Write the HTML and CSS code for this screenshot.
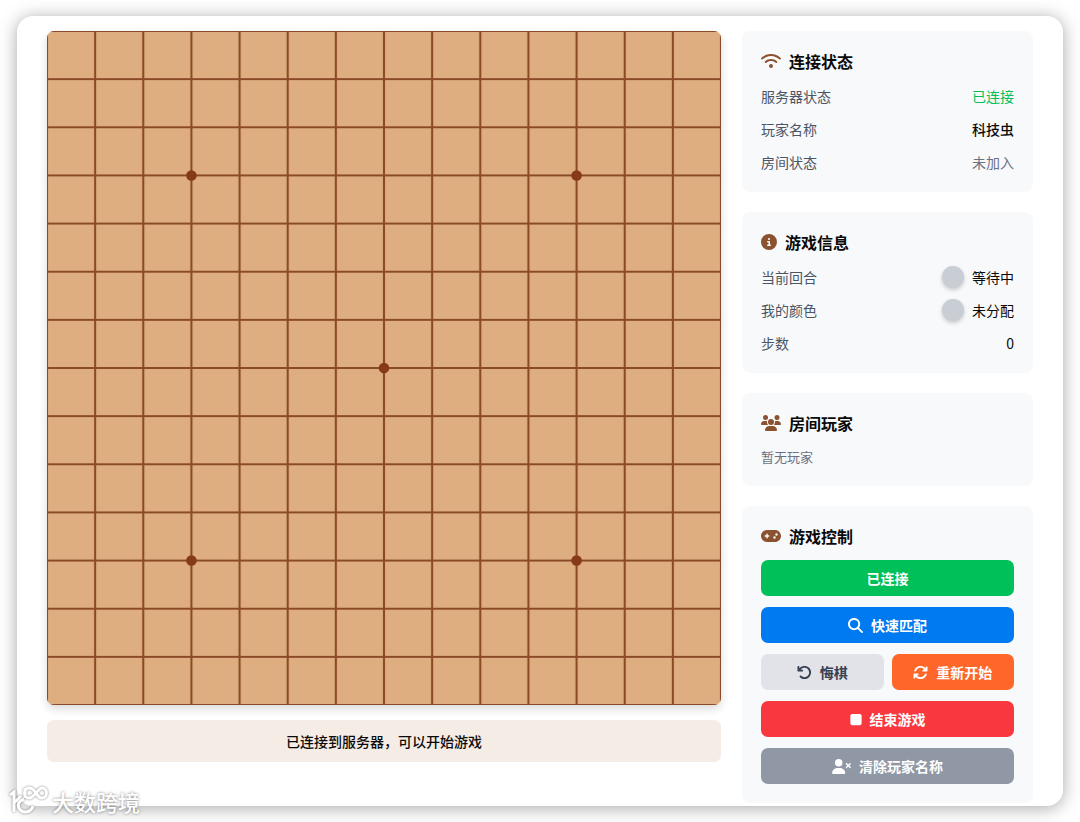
FILE: index.html
```html
<!DOCTYPE html>
<html lang="zh-CN">
<head>
  <meta charset="UTF-8">
  <meta name="viewport" content="width=device-width, initial-scale=1">
  <title>五子棋</title>
  <link rel="stylesheet" href="styles.css">
</head>
<body>
  <main class="window">
    <!-- 棋盘区域 -->
    <section class="board-area">
      <svg class="board" viewBox="0 0 700 700" role="img" aria-label="棋盘">
        <defs>
          <pattern id="grid" width="50" height="50" patternUnits="userSpaceOnUse">
            <path class="grid-line" d="M0 0H50M0 50H50M0 0V50M50 0V50"/>
          </pattern>
        </defs>
        <rect width="700" height="700" fill="url(#grid)"/>
        <g class="stars">
          <circle cx="150" cy="150" r="5.5"/>
          <circle cx="550" cy="150" r="5.5"/>
          <circle cx="350" cy="350" r="5.5"/>
          <circle cx="150" cy="550" r="5.5"/>
          <circle cx="550" cy="550" r="5.5"/>
        </g>
      </svg>
      <div class="status" role="status">已连接到服务器，可以开始游戏</div>
    </section>

    <!-- 右侧信息栏 -->
    <aside class="sidebar">
      <section class="card">
        <h2>
          <svg class="icon" width="20" height="16" viewBox="0 0 640 512"><path d="M54.2 202.9C123.2 136.700 216.800 96 320 96s196.800 40.700 265.800 106.900c12.800 12.200 33 11.800 45.200-.9s11.800-33-.9-45.200C549.700 79.500 440.400 32 320 32S90.300 79.500 9.800 156.700C-2.900 169-3.300 189.200 8.900 202s32.500 13.200 45.200 .9zM320 256c56.800 0 108.600 21.100 148.200 56c13.300 11.700 33.500 10.400 45.200-2.800s10.400-33.500-2.800-45.200C459.800 219.200 393 192 320 192s-139.800 27.200-190.500 72c-13.300 11.700-14.500 31.900-2.800 45.200s31.900 14.500 45.200 2.800c39.500-34.900 91.300-56 148.200-56zm64 160a64 64 0 1 0-128 0 64 64 0 1 0 128 0z"/></svg>
          连接状态
        </h2>
        <dl class="rows">
          <div class="row"><dt>服务器状态</dt><dd class="online">已连接</dd></div>
          <div class="row"><dt>玩家名称</dt><dd class="name">科技虫</dd></div>
          <div class="row"><dt>房间状态</dt><dd class="muted">未加入</dd></div>
        </dl>
      </section>

      <section class="card">
        <h2>
          <svg class="icon" width="16" height="16" viewBox="0 0 512 512"><path d="M256 512A256 256 0 1 0 256 0a256 256 0 1 0 0 512zM216 336h24V272H216c-13.300 0-24-10.700-24-24s10.700-24 24-24h48c13.300 0 24 10.700 24 24v88h8c13.300 0 24 10.700 24 24s-10.700 24-24 24H216c-13.300 0-24-10.700-24-24s10.700-24 24-24zm40-208a32 32 0 1 1 0 64 32 32 0 1 1 0-64z"/></svg>
          游戏信息
        </h2>
        <dl class="rows">
          <div class="row"><dt>当前回合</dt><dd><span class="piece"></span>等待中</dd></div>
          <div class="row"><dt>我的颜色</dt><dd><span class="piece"></span>未分配</dd></div>
          <div class="row"><dt>步数</dt><dd>0</dd></div>
        </dl>
      </section>

      <section class="card">
        <h2>
          <svg class="icon" width="20" height="16" viewBox="0 0 640 512"><path d="M144 0a80 80 0 1 1 0 160A80 80 0 1 1 144 0zM512 0a80 80 0 1 1 0 160A80 80 0 1 1 512 0zM0 298.700C0 239.800 47.800 192 106.700 192h42.700c15.900 0 31 3.500 44.600 9.700c-1.300 7.200-1.900 14.700-1.900 22.300c0 38.200 16.800 72.500 43.300 96H21.300C9.600 320 0 310.400 0 298.700zM405.300 320h-.7c26.600-23.500 43.300-57.800 43.300-96c0-7.600-.7-15-1.900-22.300c13.600-6.300 28.700-9.700 44.600-9.700h42.700C592.200 192 640 239.800 640 298.700c0 11.800-9.600 21.300-21.300 21.300H405.300zM224 224a96 96 0 1 1 192 0 96 96 0 1 1-192 0zM128 485.300C128 411.700 187.700 352 261.300 352H378.700C452.300 352 512 411.700 512 485.300c0 14.700-11.900 26.700-26.700 26.700H154.700c-14.700 0-26.700-11.900-26.700-26.700z"/></svg>
          房间玩家
        </h2>
        <p class="empty">暂无玩家</p>
      </section>

      <section class="card">
        <h2>
          <svg class="icon" width="20" height="16" viewBox="0 0 640 512"><path fill-rule="evenodd" d="M192 64C86 64 0 150 0 256S86 448 192 448H448c106 0 192-86 192-192s-86-192-192-192H192zM496 168a40 40 0 1 1 0 80 40 40 0 1 1 0-80zM392 304a40 40 0 1 1 80 0 40 40 0 1 1-80 0zM168 200c0-13.300 10.700-24 24-24s24 10.700 24 24v32h32c13.300 0 24 10.700 24 24s-10.700 24-24 24H216v32c0 13.300-10.700 24-24 24s-24-10.700-24-24V280H136c-13.300 0-24-10.700-24-24s10.700-24 24-24h32V200z"/></svg>
          游戏控制
        </h2>
        <div class="controls">
          <button class="btn green" type="button">已连接</button>
          <button class="btn blue" type="button">
            <svg width="15" height="15" viewBox="0 0 512 512"><path d="M416 208c0 45.900-14.900 88.300-40 122.700L502.600 457.400c12.500 12.500 12.500 32.800 0 45.300s-32.800 12.500-45.300 0L330.700 376c-34.400 25.200-76.800 40-122.700 40C93.100 416 0 322.900 0 208S93.100 0 208 0S416 93.100 416 208zM208 352a144 144 0 1 0 0-288 144 144 0 1 0 0 288z"/></svg>
            快速匹配
          </button>
          <div class="pair">
            <button class="btn light" type="button">
              <svg width="15" height="15" viewBox="0 0 512 512"><path d="M125.700 160H176c17.700 0 32 14.300 32 32s-14.300 32-32 32H48c-17.700 0-32-14.300-32-32V64c0-17.700 14.300-32 32-32s32 14.300 32 32v51.200L97.600 97.600c87.500-87.500 229.300-87.500 316.800 0s87.500 229.300 0 316.800s-229.300 87.500-316.800 0c-12.500-12.500-12.500-32.800 0-45.300s32.800-12.500 45.300 0c62.500 62.500 163.800 62.500 226.300 0s62.500-163.800 0-226.300s-163.800-62.500-226.300 0L125.700 160z"/></svg>
              悔棋
            </button>
            <button class="btn orange" type="button">
              <svg width="15" height="15" viewBox="0 0 512 512"><path d="M105.100 202.600c7.700-21.800 20.200-42.300 37.800-59.800c62.500-62.500 163.800-62.500 226.300 0L386.300 160H352c-17.700 0-32 14.300-32 32s14.300 32 32 32H463.500c17.700 0 32-14.300 32-32V80c0-17.700-14.300-32-32-32s-32 14.300-32 32v35.200L414.400 97.600c-87.500-87.500-229.300-87.500-316.800 0C73.200 122 55.600 150.700 44.800 181.400c-5.900 16.700 2.900 34.900 19.500 40.800s34.900-2.900 40.800-19.500zM16 319.600V432c0 17.700 14.300 32 32 32s32-14.300 32-32V396.900l17.600 17.500c87.500 87.400 229.300 87.400 316.700 0c24.400-24.400 42.100-53.100 52.900-83.700c5.900-16.700-2.900-34.900-19.500-40.800s-34.900 2.900-40.800 19.500c-7.700 21.800-20.200 42.300-37.800 59.800c-62.500 62.500-163.800 62.500-226.300 0L125.600 352H160c17.700 0 32-14.300 32-32s-14.300-32-32-32H48.400C30.700 288 16 302 16 319.600z"/></svg>
              重新开始
            </button>
          </div>
          <button class="btn red" type="button">
            <svg width="12" height="15" viewBox="0 0 384 512"><path d="M0 128C0 92.700 28.700 64 64 64H320c35.300 0 64 28.700 64 64V384c0 35.300-28.700 64-64 64H64c-35.300 0-64-28.700-64-64V128z"/></svg>
            结束游戏
          </button>
          <button class="btn gray" type="button">
            <svg width="19" height="15" viewBox="0 0 640 512"><path d="M96 128a128 128 0 1 1 256 0A128 128 0 1 1 96 128zM0 482.300C0 383.800 79.800 304 178.300 304h91.400C368.200 304 448 383.800 448 482.300c0 16.400-13.300 29.700-29.700 29.700H29.700C13.300 512 0 498.700 0 482.300zM471 143c9.400-9.400 24.600-9.400 33.900 0l47 47 47-47c9.400-9.400 24.600-9.400 33.900 0s9.400 24.600 0 33.900l-47 47 47 47c9.400 9.400 9.400 24.600 0 33.900s-24.600 9.400-33.900 0l-47-47-47 47c-9.400 9.400-24.600 9.400-33.900 0s-9.400-24.600 0-33.900l47-47-47-47c-9.400-9.400-9.400-24.600 0-33.900z"/></svg>
            清除玩家名称
          </button>
        </div>
      </section>
    </aside>
  </main>

  <!-- 左下角水印 -->
  <div class="watermark">
    <svg width="40" height="30" viewBox="0 0 40 30">
      <path d="M2 9l4-3v20M6 17l7-7M16 13c-5 2-7 5-5 9 3 6 12 5 14-2"/>
      <path d="M17 2v10M28 7c-3-5-5-5-7-5-6 0-6 10 0 10 3 0 5-3 7-5s4-5 6-5c6 0 6 10 0 10-3 0-4-2-6-5z"/>
    </svg>
    <span>大数跨境</span>
  </div>
</body>
</html>
```
FILE: styles.css
```css
* {
  box-sizing: border-box;
  margin: 0;
}

body {
  padding: 16px 17px;
  background: #fff;
  color: #0a0a0a;
  font-family: "Noto Sans CJK SC", sans-serif;
  font-size: 14px;
  line-height: 22px;
}

/* 主窗口 */
.window {
  display: grid;
  grid-template-columns: minmax(0, 1fr) 291px;
  align-items: start;
  gap: 21px;
  padding: 15px 30px 3px;
  background: #fff;
  border-radius: 16px;
  box-shadow: 0 2px 18px rgba(0, 0, 0, 0.35);
}

.board-area {
  display: grid;
  gap: 15px;
}

/* 棋盘 */
.board {
  display: block;
  width: 100%;
  background: #deae80;
  border-radius: 7px;
  box-shadow: 0 4px 10px rgba(0, 0, 0, 0.15);
}

.grid-line {
  stroke: #8b4a26;
  stroke-width: 2.2;
}

.stars {
  fill: #863a1a;
}

.status {
  padding: 10px;
  background: #f5ece6;
  border-radius: 7px;
  font-weight: 500;
  text-align: center;
}

/* 右侧卡片 */
.sidebar {
  display: grid;
  gap: 20px;
}

.card {
  display: grid;
  gap: 11px;
  padding: 17px 19px 19px;
  background: #f8f9fb;
  border-radius: 8px;
}

.card h2 {
  display: flex;
  align-items: center;
  gap: 8px;
  font-size: 16px;
  font-weight: 700;
  line-height: 26px;
}

.icon {
  fill: #8b5230;
}

.rows {
  display: grid;
  gap: 11px;
}

.row {
  display: flex;
  justify-content: space-between;
}

.row dt {
  color: #4a5565;
}

.row dd {
  display: flex;
  align-items: center;
  gap: 8px;
}

.row .online {
  color: #00c05a;
}

.row .name {
  font-weight: 500;
}

.row .muted {
  color: #6a7282;
}

.piece {
  width: 22px;
  height: 22px;
  background: #c9cdd4;
  border-radius: 50%;
  box-shadow: 0 2px 4px rgba(0, 0, 0, 0.2);
}

.empty {
  color: #6a7282;
  font-size: 13px;
  line-height: 20px;
}

/* 按钮 */
.controls {
  display: grid;
  gap: 11px;
}

.pair {
  display: grid;
  grid-template-columns: 1fr 1fr;
  gap: 8px;
}

.btn {
  display: flex;
  align-items: center;
  justify-content: center;
  gap: 8px;
  padding: 7px;
  border: 0;
  border-radius: 7px;
  color: #fff;
  font: inherit;
  font-weight: 700;
  cursor: pointer;
}

.btn svg {
  fill: currentColor;
}

.green {
  background: #00c05a;
}

.blue {
  background: #007af0;
}

.light {
  background: #e1e3e9;
  color: #364153;
}

.orange {
  background: #ff6629;
}

.red {
  background: #f9373f;
}

.gray {
  background: #9098a6;
}

/* 水印 */
.watermark {
  position: absolute;
  left: 8px;
  bottom: 5px;
  display: flex;
  align-items: center;
  gap: 4px;
  color: #fff;
  font-size: 22px;
  font-weight: 500;
  line-height: 32px;
  text-shadow: 0 0 3px rgba(0, 0, 0, 0.5);
}

.watermark svg {
  fill: none;
  stroke: #fff;
  stroke-width: 3;
  filter: drop-shadow(0 0 1px rgba(0, 0, 0, 0.5));
}
```
